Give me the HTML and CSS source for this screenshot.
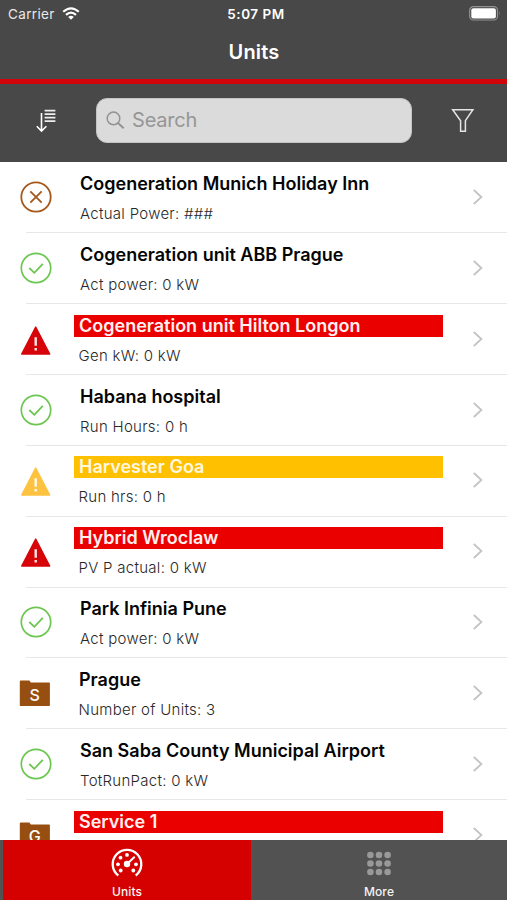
FILE: index.html
```
<!DOCTYPE html>
<html lang="en">
<head>
<meta charset="utf-8">
<title>Units</title>
<link rel="stylesheet" href="styles.css">
</head>
<body>
<svg class="defs" width="0" height="0" aria-hidden="true">
  <symbol id="ok" viewBox="0 0 32 32"><g fill="none" stroke="#6cc650" stroke-width="1.7"><circle cx="16" cy="16" r="14.7"/><path d="M9.3 16l5 4.8 8.5-9" stroke-width="1.8"/></g></symbol>
  <symbol id="off" viewBox="0 0 32 32"><g fill="none" stroke="#a5581c" stroke-width="1.8"><circle cx="16" cy="16" r="14.7"/><path d="M10.3 10.3l11.4 11.4M21.7 10.3L10.3 21.7"/></g></symbol>
  <symbol id="warn" viewBox="0 0 32 32"><path d="M15.7 4.1L1.7 31h28z" fill="currentColor" stroke="currentColor" stroke-width="1.4" stroke-linejoin="round"/><path d="M15.7 14.2v8.6M15.7 25v2.6" stroke="#fff" stroke-opacity=".9" stroke-width="2.4"/></symbol>
  <symbol id="folder" viewBox="0 0 32 32"><path d="M.8 4.4q0-1 1-1h8.6l1.4 2.2h18.4q.7 0 .7.8v21.8q0 .8-.7.8H1.6q-.8 0-.8-.8z" fill="#974f11"/></symbol>
  <symbol id="chev" viewBox="0 0 12 18"><path d="M1.8 2l7.6 7-7.6 7" fill="none" stroke="#c4c4c6" stroke-width="1.8"/></symbol>
</svg>
<div class="app">
  <header class="top">
    <div class="status">
      <div class="carrier"><span>Carrier</span>
        <svg width="18" height="13" viewBox="0 0 18 13"><g fill="none" stroke="#fff" stroke-width="2.2"><path d="M1.2 4.8Q9-2.2 16.8 4.8"/><path d="M4 7.9Q9 3.5 14 7.9"/></g><path d="M6.2 10Q9 7.7 11.8 10L9 12.8z" fill="#fff"/></svg>
      </div>
      <div class="time">5:07 PM</div>
      <svg class="battery" width="32" height="15" viewBox="0 0 32 15"><rect x=".7" y=".7" width="27.8" height="13.3" rx="3.6" fill="none" stroke="#929292" stroke-width="1.2"/><rect x="2.3" y="2.3" width="24.6" height="10.1" rx="2" fill="#fff"/><path d="M30 5.3q1.5 2.1 0 4.2z" fill="#929292"/></svg>
    </div>
    <h1>Units</h1>
  </header>
  <div class="tools">
    <svg class="sort" width="20" height="24" viewBox="0 0 20 24"><path d="M5.5 4v18M.8 17.3l4.7 4.8 4.9-4.8" fill="none" stroke="#fff" stroke-width="1.6"/><path d="M8.6 1.7h10.8M8.6 5.2h10.8M8.6 8.7h10.8M8.6 12.2h10.8" stroke="#eee" stroke-width="1.7"/></svg>
    <div class="search">
      <svg width="19" height="19" viewBox="0 0 19 19" fill="none" stroke="#929292" stroke-width="1.5"><circle cx="7.5" cy="7.4" r="6.3"/><path d="M12 12l5.7 5.3" stroke-width="1.9"/></svg>
      <span>Search</span>
    </div>
    <svg class="filter" width="24" height="25" viewBox="0 0 24 25"><path d="M1.7 1.7h20.2l-7.5 11v10.5H9.6V12.7z" fill="none" stroke="#e5e5e5" stroke-width="1.5"/></svg>
  </div>
  <main class="list">
    <div class="row"><svg class="icon"><use href="#off"/></svg><div class="body"><h2>Cogeneration Munich Holiday Inn</h2><p>Actual Power: ###</p></div><svg class="chev"><use href="#chev"/></svg></div>
    <div class="row"><svg class="icon"><use href="#ok"/></svg><div class="body"><h2>Cogeneration unit ABB Prague</h2><p>Act power: 0 kW</p></div><svg class="chev"><use href="#chev"/></svg></div>
    <div class="row near"><svg class="icon red"><use href="#warn"/></svg><div class="body"><h2 class="alarm">Cogeneration unit Hilton Longon</h2><p>Gen kW: 0 kW</p></div><svg class="chev"><use href="#chev"/></svg></div>
    <div class="row"><svg class="icon"><use href="#ok"/></svg><div class="body"><h2>Habana hospital</h2><p>Run Hours: 0 h</p></div><svg class="chev"><use href="#chev"/></svg></div>
    <div class="row near"><svg class="icon yellow"><use href="#warn"/></svg><div class="body"><h2 class="warning">Harvester Goa</h2><p>Run hrs: 0 h</p></div><svg class="chev"><use href="#chev"/></svg></div>
    <div class="row near"><svg class="icon red"><use href="#warn"/></svg><div class="body"><h2 class="alarm">Hybrid Wroclaw</h2><p>PV P actual: 0 kW</p></div><svg class="chev"><use href="#chev"/></svg></div>
    <div class="row"><svg class="icon"><use href="#ok"/></svg><div class="body"><h2>Park Infinia Pune</h2><p>Act power: 0 kW</p></div><svg class="chev"><use href="#chev"/></svg></div>
    <div class="row near"><div class="icon group"><svg><use href="#folder"/></svg><span>S</span></div><div class="body"><h2>Prague</h2><p>Number of Units: 3</p></div><svg class="chev"><use href="#chev"/></svg></div>
    <div class="row"><svg class="icon"><use href="#ok"/></svg><div class="body"><h2>San Saba County Municipal Airport</h2><p>TotRunPact: 0 kW</p></div><svg class="chev"><use href="#chev"/></svg></div>
    <div class="row near"><div class="icon group"><svg><use href="#folder"/></svg><span>G</span></div><div class="body"><h2 class="alarm">Service 1</h2></div><svg class="chev"><use href="#chev"/></svg></div>
  </main>
  <nav class="tabs">
    <div class="tab active">
      <svg width="32" height="30" viewBox="0 0 32 30"><path d="M7.3 27.5A14.3 14.3 0 1 1 24.7 27.5" fill="none" stroke="#fff" stroke-width="2.3"/><g fill="#fff"><circle cx="16" cy="16" r="3.2"/><circle cx="7" cy="16.3" r="1.9"/><circle cx="9.5" cy="9.7" r="1.9"/><circle cx="16" cy="6.9" r="1.9"/><circle cx="25" cy="16.3" r="1.9"/><circle cx="9.7" cy="22.5" r="1.9"/><circle cx="22.3" cy="22.5" r="1.9"/></g><path d="M16 16l7.7-7.3" stroke="#fff" stroke-width="2"/></svg>
      <span>Units</span>
    </div>
    <div class="tab">
      <svg width="32" height="30" viewBox="0 0 32 30" fill="#999"><circle cx="7.4" cy="7" r="3.3"/><circle cx="16" cy="7" r="3.3"/><circle cx="24.6" cy="7" r="3.3"/><circle cx="7.4" cy="15.5" r="3.3"/><circle cx="16" cy="15.5" r="3.3"/><circle cx="24.6" cy="15.5" r="3.3"/><circle cx="7.4" cy="24" r="3.3"/><circle cx="16" cy="24" r="3.3"/><circle cx="24.6" cy="24" r="3.3"/></svg>
      <span>More</span>
    </div>
  </nav>
</div>
</body>
</html>
```
FILE: styles.css
```
* { box-sizing: border-box; }
body { margin: 0; background: #fff; font-family: Inter, "Liberation Sans", sans-serif; }
h1, h2, p { margin: 0; }
svg { display: block; flex: none; }
.defs { position: absolute; }
.app { width: 507px; height: 900px; overflow: hidden; display: flex; flex-direction: column; }

.top { height: 84px; flex: none; background: #484848; border-bottom: 5px solid #d10509; color: #fff; }
.status { height: 28px; display: grid; grid-template-columns: 1fr auto 1fr; align-items: center; padding: 0 6px 0 8px; font-size: 13.5px; }
.carrier { display: flex; align-items: center; gap: 7px; color: #e8e8e8; letter-spacing: .35px; }
.carrier svg { margin-top: -1px; }
.time { font-weight: 600; letter-spacing: .5px; padding-left: 3px; }
.battery { justify-self: end; margin-top: -2px; }
h1 { text-align: center; font-size: 20px; line-height: 24px; font-weight: 600; margin-top: 12px; padding-left: 1px; letter-spacing: .15px; }

.tools { height: 78px; flex: none; background: #484848; display: flex; align-items: flex-start; padding-top: 14px; }
.sort { margin: 10.5px 40px 0 36px; }
.search { width: 316px; height: 45px; border-radius: 11px; background: #dbdbdb; border: 1px solid #c4c4c4; display: flex; align-items: center; gap: 7px; padding-left: 9px; padding-bottom: 1px; color: #969696; font-size: 20px; letter-spacing: -.2px; }
.filter { margin: 9.5px 0 0 39px; }

.list { flex: 1; min-height: 0; overflow: hidden; padding-top: .5px; }
.row { height: 70.85px; display: flex; position: relative; }
.row::after { content: ""; position: absolute; left: 26px; right: 0; bottom: 0; height: 1px; background: #e7e7e8; }
.icon { width: 32px; height: 32px; margin: 18.6px 0 0 19.5px; flex: none; }
.icon.red { color: #d60509; }
.icon.yellow { color: #fdc23f; }
.group { display: grid; color: #fff; }
.row > .group { margin-left: 19.2px; margin-right: .3px; }
.group > * { grid-area: 1 / 1; }
.group svg { width: 32px; height: 32px; }
.group span { place-self: center; font-size: 16px; line-height: 20px; font-weight: 500; margin: 3px 1px 0 0; }
.body { width: 370px; margin-left: 22.5px; padding-top: 10.5px; }
h2 { font-size: 18px; line-height: 22px; font-weight: 600; color: #050505; padding-left: 6px; white-space: nowrap; }
p { font-size: 15px; line-height: 20px; margin-top: 9px; padding-left: 6px; color: #282828; font-weight: 300; letter-spacing: .28px; }
.near h2, .near p { padding-left: 5px; }
.near p { padding-left: 4.5px; }
.alarm { background: #eb0000; color: #fff0f0; }
.warning { background: #ffc000; color: #fff8e0; }
.body .alarm, .body .warning { width: 369px; }
.chev { width: 12px; height: 18px; margin: 25.6px 0 0 27.6px; }

.tabs { height: 60px; flex: none; background: #525252; display: flex; padding-left: 3px; }
.tab { flex: 1; display: flex; flex-direction: column; align-items: center; padding-top: 8px; color: #f4f4f4; font-size: 12px; line-height: 14px; font-weight: 500; letter-spacing: .1px; gap: 7px; }
.tab.active { flex: 0 0 248px; background: #d50000; }
```
